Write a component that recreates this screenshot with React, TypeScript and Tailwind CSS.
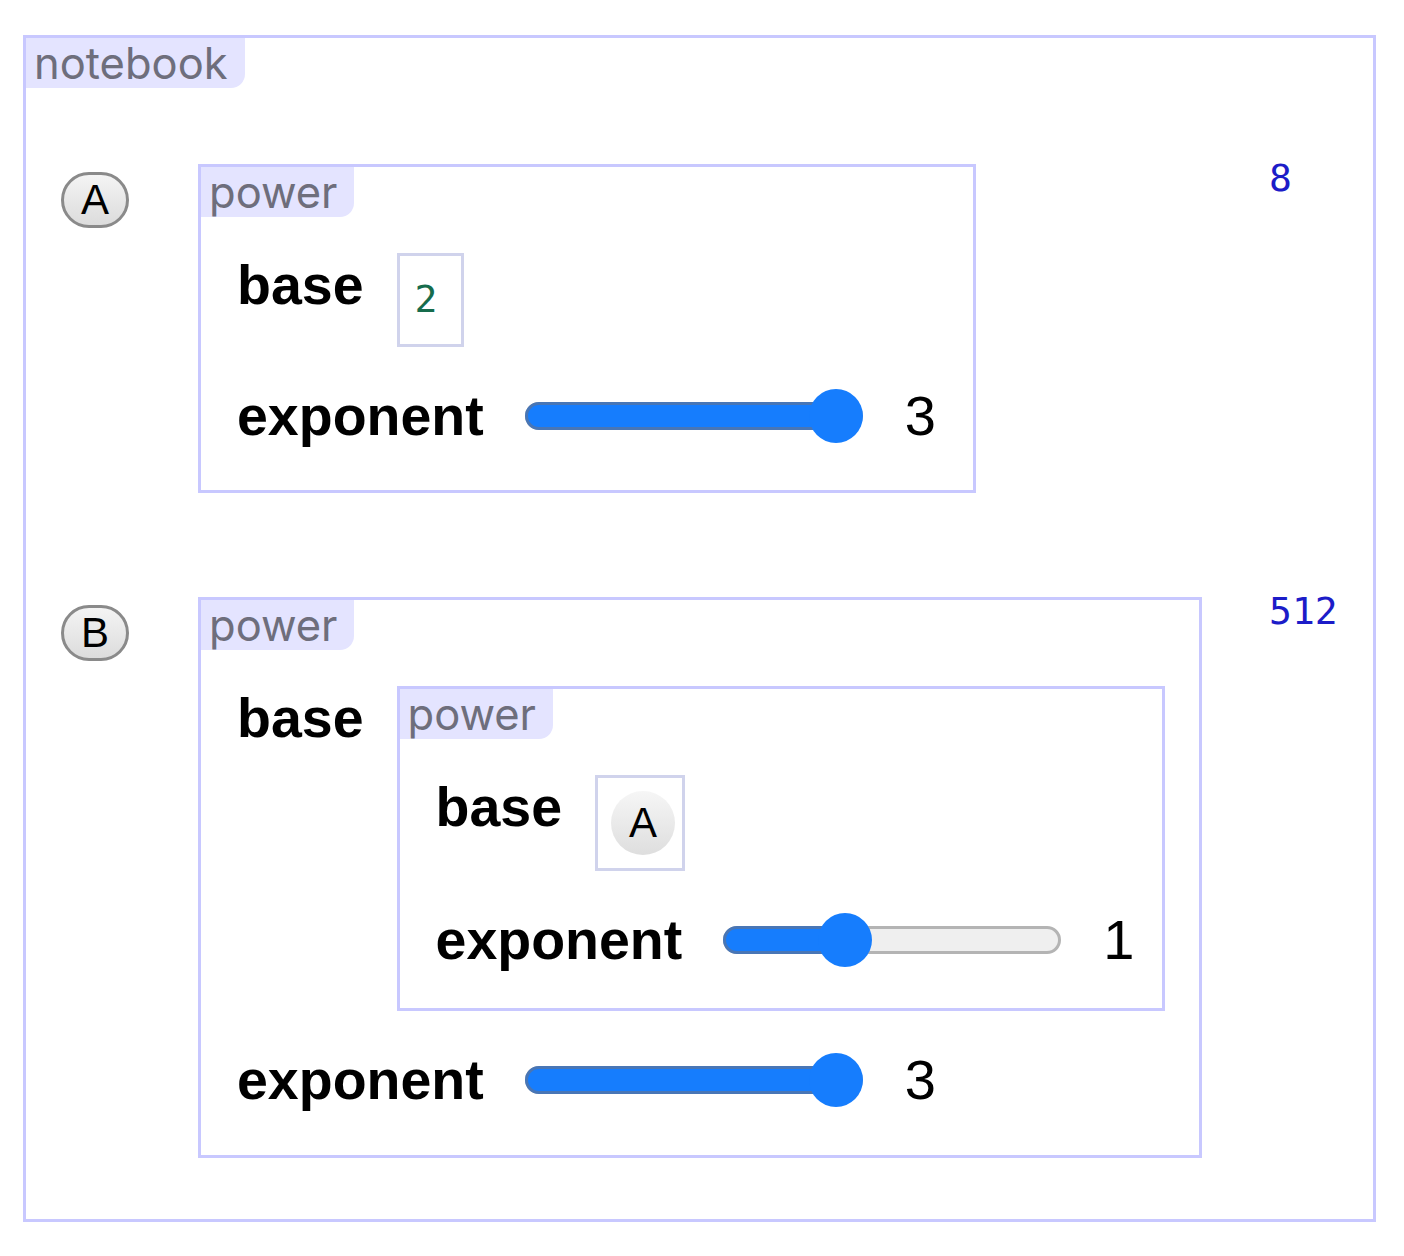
import React from "react";

const SANS = "font-['Liberation_Sans',Arial,sans-serif]";
const MONO = "font-['DejaVu_Sans_Mono',monospace]";

function Tag({ text }: { text: string }) {
  return (
    <div className="h-[50px] self-start rounded-br-[14px] bg-[#e4e4ff] pl-[8px] pr-[17px] font-['Inter',sans-serif] text-[43.5px] leading-[50px] text-[#6e6e7c]">
      {text}
    </div>
  );
}

function Name({ children }: { children: React.ReactNode }) {
  return <div className={`${SANS} text-[55.5px] font-bold leading-[64px] text-black`}>{children}</div>;
}

function Slider({ value, max }: { value: number; max: number }) {
  const width = 338;
  const center = 27 + (value / max) * (width - 54);
  return (
    <div className="relative mx-[5px] h-[54px] w-[338px] shrink-0">
      <div className="absolute left-0 right-0 top-[13px] h-[28px] rounded-full border-[3px] border-[#b4b4b4] bg-[#efefef]" />
      <div
        className="absolute left-0 top-[13px] h-[28px] rounded-full border-[3px] border-[#4876b6] bg-[#167dfd]"
        style={{ width: center + 12 }}
      />
      <div className="absolute top-0 h-[54px] w-[54px] rounded-full bg-[#167dfd]" style={{ left: center - 27 }} />
    </div>
  );
}

function Value({ children }: { children: React.ReactNode }) {
  return <div className={`${SANS} ml-[37px] text-[56px] leading-[64px] text-black`}>{children}</div>;
}

function ExponentRow({ value, max }: { value: number; max: number }) {
  return (
    <div className="flex h-[64px] items-center">
      <Name>exponent</Name>
      <div className="ml-[36px] flex items-center">
        <Slider value={value} max={max} />
      </div>
      <Value>{value}</Value>
    </div>
  );
}

function Chip({ label }: { label: string }) {
  return (
    <div className="flex h-[64px] w-[64px] items-center justify-center rounded-full bg-gradient-to-b from-[#f6f6f6] to-[#dedede]">
      <span className={`${SANS} text-[42px] leading-none text-black`}>{label}</span>
    </div>
  );
}

function Power({
  width,
  base,
  exponent,
  pb,
}: {
  width: string;
  base: React.ReactNode;
  exponent: number;
  pb: string;
}) {
  return (
    <div className={`flex flex-col self-start border-[3px] border-[#c8c8ff] bg-white ${width}`}>
      <Tag text="power" />
      <div className={`flex flex-col gap-[37px] pl-[36px] pt-[36px] ${pb}`}>
        <div className="flex items-start">
          <Name>base</Name>
          <div className="ml-[33px]">{base}</div>
        </div>
        <ExponentRow value={exponent} max={3} />
      </div>
    </div>
  );
}

function CellButton({ label }: { label: string }) {
  return (
    <div className="pl-[35px] pt-[8px]">
      <div className="flex h-[56px] w-[68px] items-center justify-center rounded-full border-[3px] border-[#8a8a8a] bg-gradient-to-b from-[#f4f4f4] to-[#dcdcdc]">
        <span className={`${SANS} text-[42px] leading-none text-black`}>{label}</span>
      </div>
    </div>
  );
}

function Result({ children }: { children: React.ReactNode }) {
  return <div className={`${MONO} -mt-[5px] text-[38px] leading-[38px] text-[#1c1cc8]`}>{children}</div>;
}

export default function App() {
  return (
    <div className="min-h-[1256px] bg-white pl-[23px] pt-[35px]">
      <div className="flex w-[1353px] flex-col border-[3px] border-[#c8c8ff] pb-[61px]">
        <Tag text="notebook" />
        <div className="mt-[76px] grid grid-cols-[172px_1fr_104px] gap-y-[104px]">
          <CellButton label="A" />
          <Power
            width="w-[778px]"
            pb="pb-[42px]"
            exponent={3}
            base={
              <div className="h-[94px] w-[67px] border-[3px] border-[#d0d3ec] pl-[15px] pt-[24px]">
                <div className={`${MONO} text-[38px] leading-[38px] text-[#166c4c]`}>2</div>
              </div>
            }
          />
          <Result>8</Result>

          <CellButton label="B" />
          <Power
            width="w-[1004px]"
            pb="pb-[43px]"
            exponent={3}
            base={
              <Power
                width="w-[768px]"
                pb="pb-[36px]"
                exponent={1}
                base={
                  <div className="h-[96px] w-[90px] border-[3px] border-[#d0d3ec] pl-[13px] pt-[13px]">
                    <Chip label="A" />
                  </div>
                }
              />
            }
          />
          <Result>512</Result>
        </div>
      </div>
    </div>
  );
}
